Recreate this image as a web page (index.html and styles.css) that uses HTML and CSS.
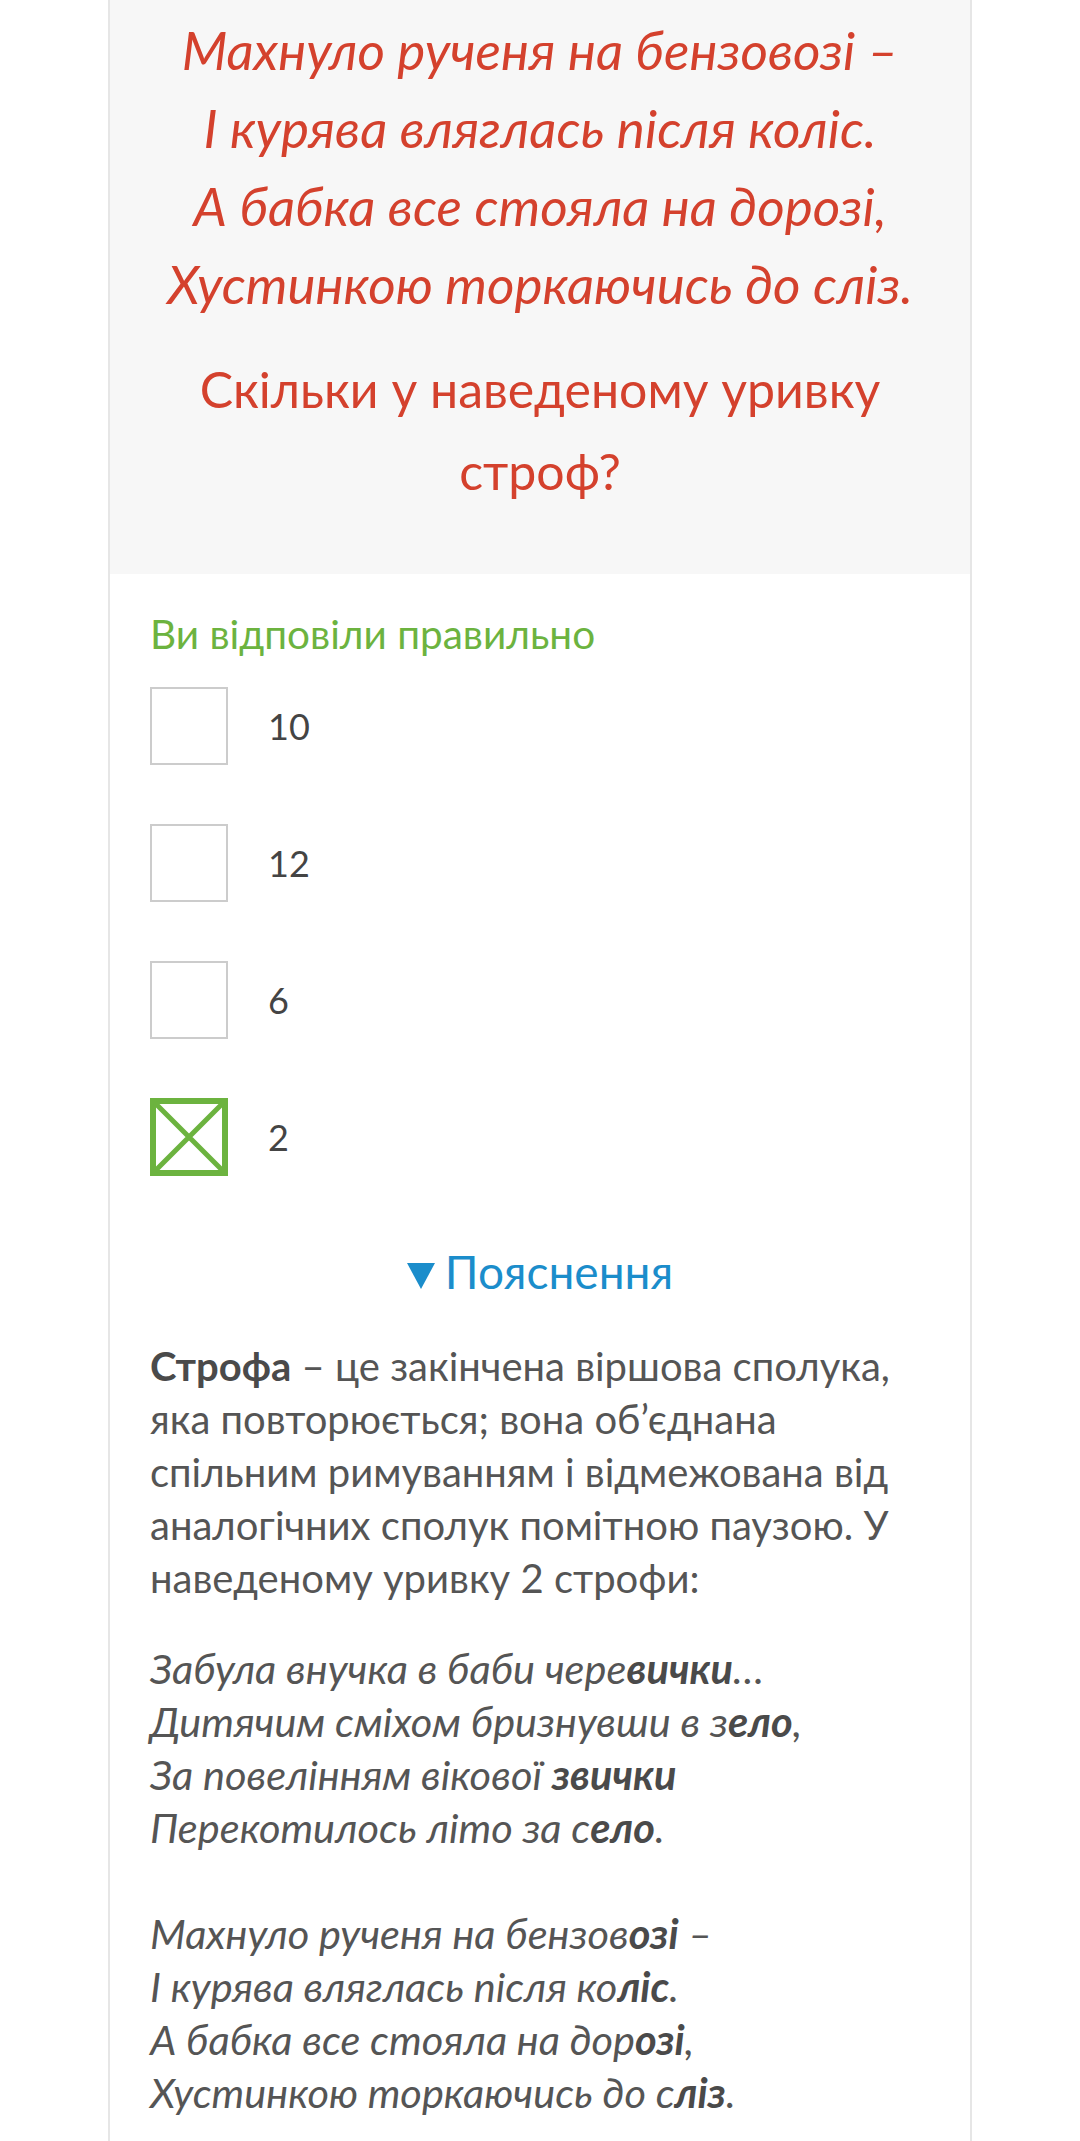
FILE: index.html
```html
<!DOCTYPE html>
<html lang="uk">
<head>
<meta charset="utf-8">
<title>Тест</title>
<link rel="stylesheet" href="styles.css">
</head>
<body>
<div class="card">
  <section class="task">
    <p class="verse">Махнуло рученя на бензовозі –<br>І курява вляглась після коліс.<br>А бабка все стояла на дорозі,<br>Хустинкою торкаючись до сліз.</p>
    <p class="question">Скільки у наведеному уривку<br>строф?</p>
  </section>
  <section class="answers">
    <p class="result">Ви відповіли правильно</p>
    <ul class="options">
      <li class="option"><span class="box"></span><span class="label">10</span></li>
      <li class="option"><span class="box"></span><span class="label">12</span></li>
      <li class="option"><span class="box"></span><span class="label">6</span></li>
      <li class="option"><span class="box box-checked"><svg viewBox="0 0 78 78" width="78" height="78"><rect x="3" y="3" width="72" height="72" fill="none" stroke="#6cb33f" stroke-width="6"/><path d="M5 5 L73 73 M73 5 L5 73" stroke="#6cb33f" stroke-width="5" fill="none"/></svg></span><span class="label">2</span></li>
    </ul>
    <div class="explain-toggle"><span class="tri"></span>Пояснення</div>
    <p class="explain"><b>Строфа</b> – це закінчена віршова сполука,<br>яка повторюється; вона об’єднана<br>спільним римуванням і відмежована від<br>аналогічних сполук помітною паузою. У<br>наведеному уривку 2 строфи:</p>
    <p class="poem">Забула внучка в баби чере<b>вички</b>…<br>Дитячим сміхом бризнувши в з<b>ело</b>,<br>За повелінням вікової <b>звички</b><br>Перекотилось літо за с<b>ело</b>.<br><br>Махнуло рученя на бензов<b>озі</b> –<br>І курява вляглась після ко<b>ліс</b>.<br>А бабка все стояла на дор<b>озі</b>,<br>Хустинкою торкаючись до с<b>ліз</b>.</p>
  </section>
</div>
</body>
</html>
```

FILE: styles.css
```css
html, body {
  margin: 0;
  padding: 0;
  background: #ffffff;
}
body {
  font-family: Lato, "Open Sans", "DejaVu Sans", sans-serif;
  color: #555555;
  height: 2141px;
  overflow: hidden;
}
.card {
  margin: 0 108px;
  border-left: 2px solid #e6e6e6;
  border-right: 2px solid #e6e6e6;
  min-height: 2141px;
  box-sizing: border-box;
}
.task {
  background: #f7f7f7;
  padding: 11px 20px 62px;
  text-align: center;
  color: #d4412d;
}
.verse {
  margin: 0;
  font-style: italic;
  font-size: 53px;
  line-height: 78px;
}
.question {
  margin: 25px 0 0;
  font-size: 50px;
  line-height: 82px;
}
.answers {
  padding: 33px 40px 0;
}
.result {
  margin: 0;
  color: #6cb33f;
  font-size: 40.5px;
  line-height: 53px;
}
.options {
  list-style: none;
  margin: 27px 0 0;
  padding: 0;
  display: flex;
  flex-direction: column;
  gap: 59px;
}
.option {
  display: flex;
  align-items: center;
  gap: 40px;
  height: 78px;
}
.box {
  width: 78px;
  height: 78px;
  box-sizing: border-box;
  border: 2px solid #cccccc;
  flex: none;
}
.box-checked {
  border: none;
}
.box-checked svg {
  display: block;
}
.label {
  font-size: 36px;
  color: #444444;
}
.explain-toggle {
  margin-top: 66px;
  text-align: center;
  color: #1b8dcb;
  font-size: 46px;
  line-height: 60px;
}
.tri {
  display: inline-block;
  width: 0;
  height: 0;
  border-left: 14px solid transparent;
  border-right: 14px solid transparent;
  border-top: 26px solid #1b8dcb;
  margin-right: 10px;
  vertical-align: 0;
}
.explain {
  margin: 38px 0 0;
  font-size: 40px;
  line-height: 53px;
}
.explain b {
  color: #4a4a4a;
}
.poem {
  margin: 37px 0 0;
  font-size: 41.5px;
  line-height: 53px;
  font-style: italic;
}
.poem b {
  color: #4a4a4a;
}
```
